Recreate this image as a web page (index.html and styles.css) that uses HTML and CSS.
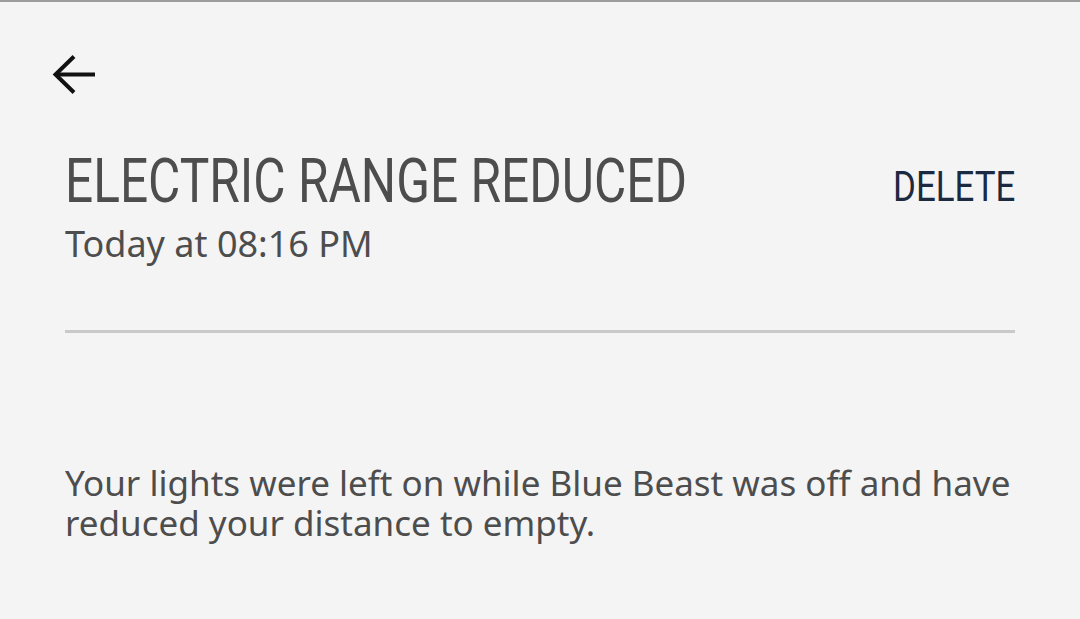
FILE: index.html
```html
<!DOCTYPE html>
<html lang="en">
<head>
    <meta charset="UTF-8">
    <meta name="viewport" content="width=device-width, initial-scale=1.0">
    <title>Message - Electric Range Reduced</title>
    <link rel="stylesheet" href="styles.css">
</head>
<body>
    <div class="screen">
        <div class="toolbar">
            <button class="back-btn" aria-label="Back">
                <svg class="back-icon" viewBox="0 0 44 42" fill="none" stroke="currentColor" stroke-width="4">
                    <path d="M43 20.5H4"/>
                    <path d="M22 2.5L3.5 20.5L22 38.5"/>
                </svg>
            </button>
        </div>

        <div class="message-head">
            <div class="message-title">
                <h1>ELECTRIC RANGE REDUCED</h1>
                <p class="message-date">Today at 08:16 PM</p>
            </div>
            <button class="delete-btn">DELETE</button>
        </div>

        <hr class="divider">

        <p class="message-body">Your lights were left on while Blue Beast was off and have reduced your distance to empty.</p>
    </div>
</body>
</html>
```

FILE: styles.css
```css
* {
    margin: 0;
    padding: 0;
    box-sizing: border-box;
}

html, body {
    height: 100%;
}

body {
    font-family: "Noto Sans", "DejaVu Sans", sans-serif;
    background: #f4f4f4;
    border-top: 2px solid #9c9c9c;
    color: #4d4d4d;
    overflow: hidden;
}

.screen {
    padding: 0 65px;
}

.toolbar {
    height: 143px;
    padding-top: 52px;
}

.back-btn {
    background: none;
    border: none;
    color: #111;
    margin-left: -13px;
    width: 44px;
    height: 42px;
    cursor: pointer;
}

.back-icon {
    display: block;
    width: 44px;
    height: 42px;
}

.message-head {
    display: flex;
    justify-content: space-between;
    align-items: flex-start;
}

/* no condensed face installed, so the narrow look comes from scaleX */
.message-head h1 {
    font-family: "Roboto", sans-serif;
    font-weight: 400;
    font-size: 62px;
    line-height: 72px;
    color: #4d4d4d;
    white-space: nowrap;
    transform: scaleX(0.8);
    transform-origin: left center;
}

.message-date {
    padding-top: 5px;
    font-size: 36px;
    line-height: 44px;
    color: #4d4d4d;
}

.delete-btn {
    background: none;
    border: none;
    font-family: "Roboto", sans-serif;
    font-size: 42px;
    line-height: 50px;
    margin-top: 17px;
    color: #1b2a40;
    cursor: pointer;
    transform: scaleX(0.83);
    transform-origin: right center;
}

.divider {
    border: none;
    height: 3px;
    background: #c9c9c9;
    margin-top: 64px;
}

.message-body {
    margin-top: 130px;
    font-size: 35px;
    line-height: 40px;
    color: #4d4d4d;
}
```
